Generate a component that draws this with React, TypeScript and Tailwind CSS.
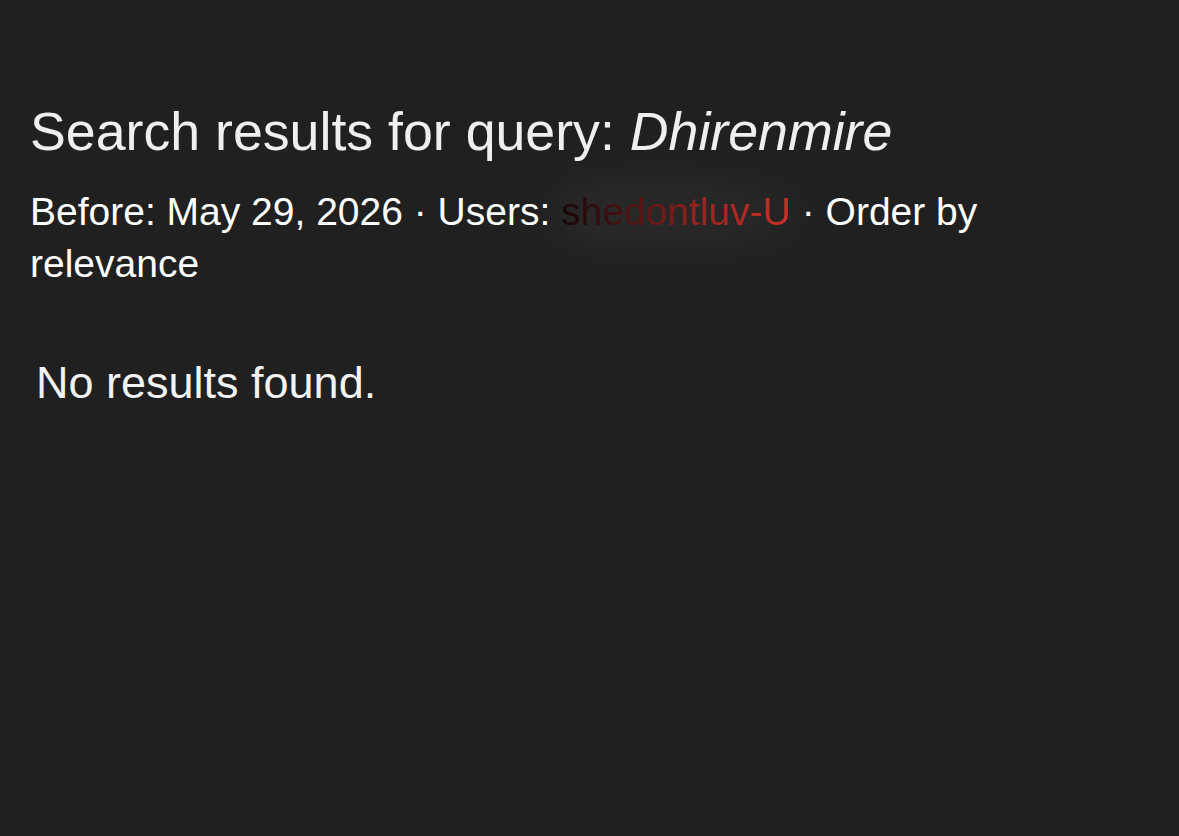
export default function App() {
  return (
    <div className="min-h-[836px] w-full bg-[#202020] font-['Liberation_Sans',Arial,sans-serif] text-[#f2f2f2]">
      <div className="px-[30px] pt-[98px]">
        <h1 className="text-[53.7px] leading-[66px] font-normal text-[#efefef]">
          Search results for query: <i>Dhirenmire</i>
        </h1>
        <p className="mt-[22px] text-[39px] leading-[52px] text-white">
          Before: May 29, 2026 · Users:{' '}
          <span className="[filter:drop-shadow(0_0_28px_rgba(255,255,255,0.35))]">
            <span className="bg-[linear-gradient(90deg,#140606_0%,#5a1414_35%,#9a2420_60%,#c8302a_100%)] bg-clip-text text-transparent">
              shedontluv-U
            </span>
          </span>{' '}
          · Order by relevance
        </p>
        <p className="mt-[65px] pl-[6px] text-[45px] leading-[56px] text-[#f2f2f2]">No results found.</p>
      </div>
    </div>
  )
}
